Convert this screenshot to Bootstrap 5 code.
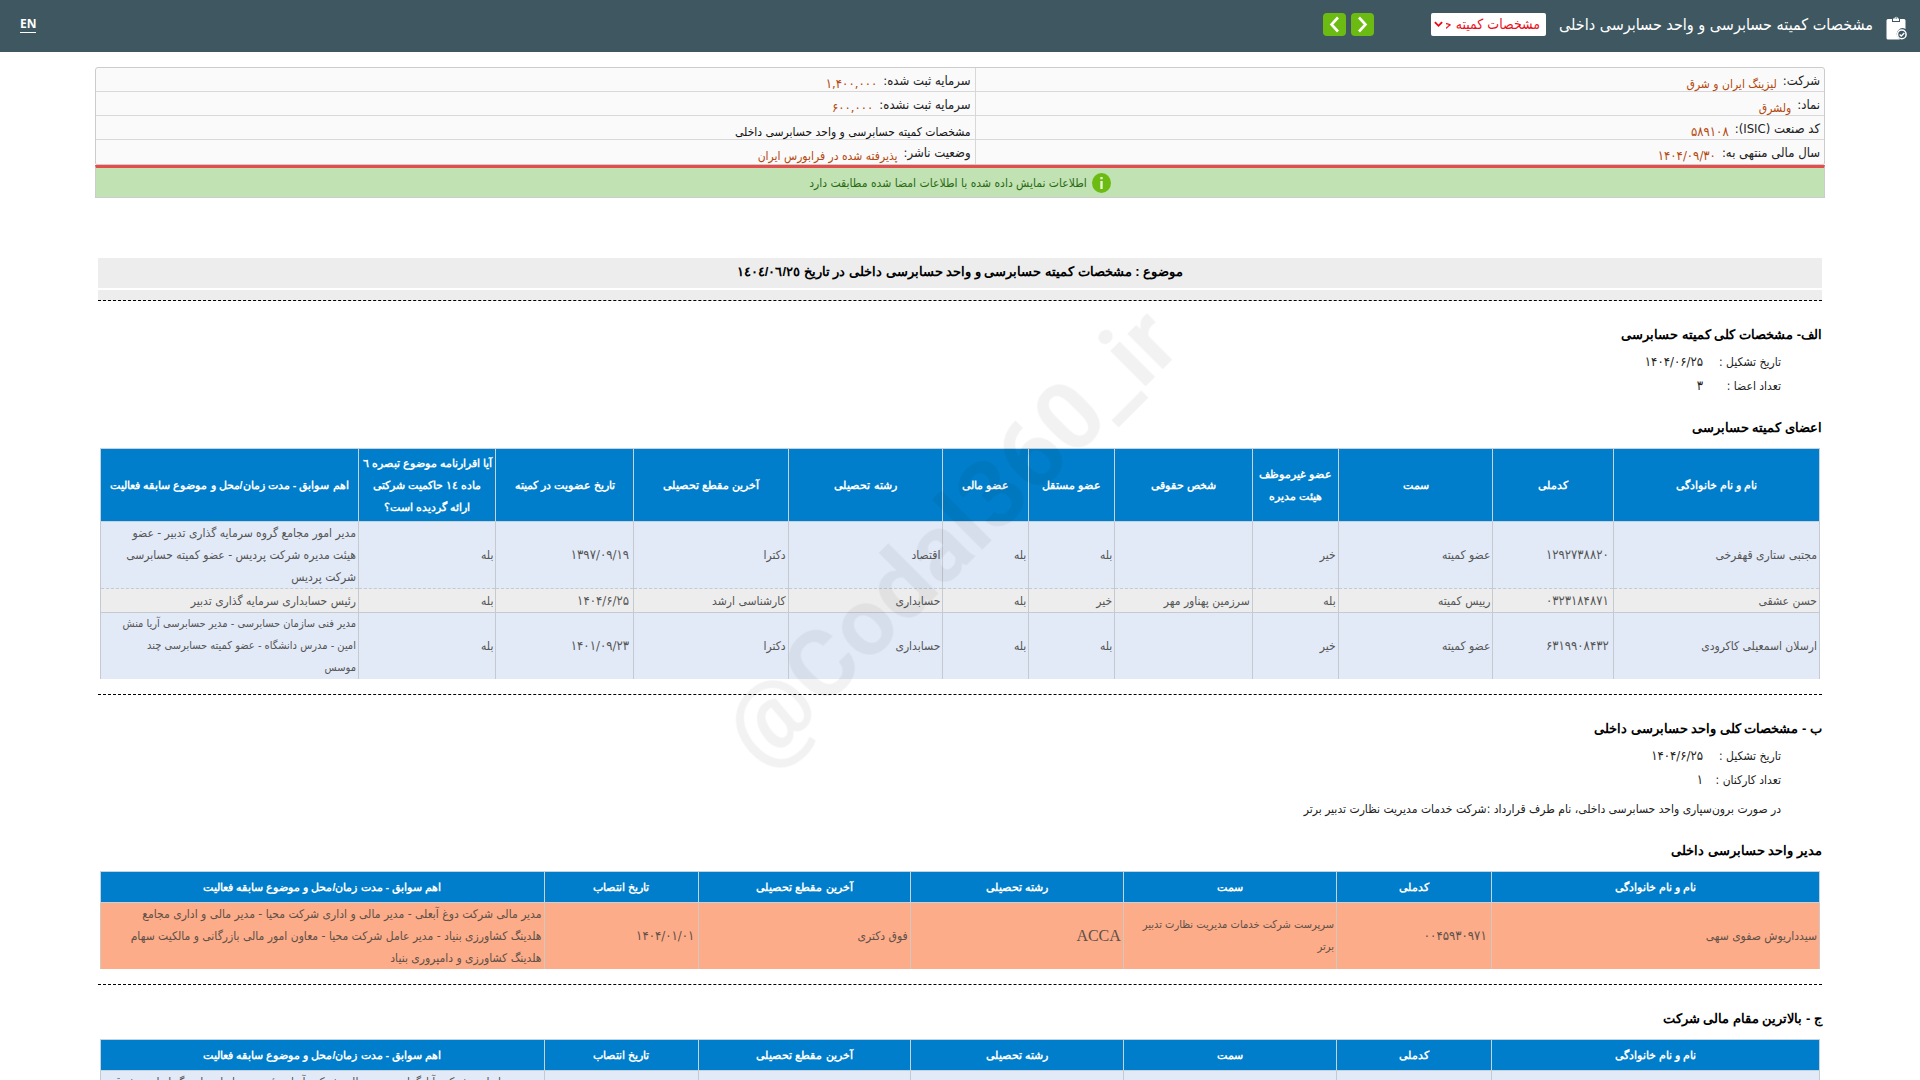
<!DOCTYPE html>
<html lang="fa" dir="rtl">
<head>
<meta charset="utf-8">
<meta name="viewport" content="width=device-width, initial-scale=1">
<title>مشخصات کمیته حسابرسی و واحد حسابرسی داخلی</title>
<link rel="stylesheet" href="https://cdn.jsdelivr.net/npm/bootstrap@5.3.0/dist/css/bootstrap.min.css">
<style>
  body { font-family: "DejaVu Sans Condensed", "DejaVu Sans", sans-serif; font-size: 12px; line-height: 24px; color: #222; background: #fff; }
  .topbar { background: #3e5761; height: 52px; padding: 0 13px 4px 20px; }
  .topbar-icon { margin-top: 6px; }
  .topbar-title { font-size: 16px; line-height: 24px; color: #fff; padding-top: 2px; margin: 0 13px 0 13px; }
  .sheet-select { width: 115px; height: 23px; padding: 0 6px 0 15px; border: 0; border-radius: 2px; font-size: 14px; line-height: 22px; color: #e8101c; text-overflow: clip;
    background: #fff url("data:image/svg+xml,%3Csvg xmlns='http://www.w3.org/2000/svg' viewBox='0 0 10 8'%3E%3Cpath d='M1 2l4 4 4-4' fill='none' stroke='%23f00010' stroke-width='2'/%3E%3C/svg%3E") no-repeat left 3px center / 9px 8px; }
  .step-btn { width: 23px; height: 23px; border: 0; border-radius: 4px; background: #6cbb12; }
  .step-group { margin-right: 57px; gap: 5px; }
  .lang-link { font: bold 12px/16px "Noto Sans", sans-serif; color: #fff; border-bottom: 1px solid #fff; }
  .page-body { padding: 15px 95px 0; }
  .info-box { border: 1px solid #ccc; border-radius: 3px 3px 2px 2px; background: #fafafa; }
  .info-line { height: 24px; padding: 0 4px; border-bottom: 1px solid #d8d8d8; gap: 6px; color: #222; }
  .info-line:last-child { border-bottom: 0; }
  .info-half + .info-half { border-right: 1px solid #d8d8d8; }
  .info-half-first { width: 49.1%; }
  .info-label { font-size: 13px; line-height: 26px; }
  .info-value { padding-top: 4px; color: #b5480f; }
  .info-plain { color: #111; }
  .notice-bar { border: 1px solid #ccc; border-top: 3px solid #e64c4c; background: #c1e2b3; height: 33px; gap: 5px; color: #2a6b14; }
  .report { margin: 60px 3px 0; }
  .subject { background: #ededed; line-height: 28px; padding-bottom: 2px; font-size: 13px; }
  .subject-tail { background: #ededed; height: 11px; margin-top: 2px; }
  .cut { border-bottom: 1px dashed #000; }
  .cut-after { padding-top: 15px; }
  .subject, .sec-title, .grid-table th { font-family: "Liberation Sans", sans-serif; font-weight: bold; }
  .sec-title { font-size: 13px; line-height: 24px; margin: 0; color: #000; }
  .sec-gap { padding-top: 22px; }
  .facts { padding: 3px 41px 0 0; }
  .facts dt { width: 78px; font-weight: normal; }
  .facts dd { margin: 0; }
  .contract { padding: 5px 41px 0 0; margin: 0; }
  .sub-gap { padding-top: 18px; }
  .table-hold { padding: 8px 2px 0; }
  .grid-table { width: 100%; table-layout: fixed; border-collapse: collapse; line-height: 22px; color: #555; }
  .grid-table th { background: #007ecb; color: #fff; font-size: 11px; text-align: center; border: 1px solid #c6d3dd; padding: 4px 0; }
  .grid-table .tall th { padding: 3px 0; }
  .grid-table td { border: 1px solid #c5c9d0; border-bottom: 0; padding: 0 2px; vertical-align: middle; background: #e2eaf8; }
  .grid-table .soft td { background: #ededed; border-top-style: dashed; height: 24px; }
  .grid-table .warm td { background: #fcac89; color: #5f5048; border-color: #d3c8c0; }
  .num { font-size: 13px; }
  .grid-table .num { padding-right: 4px; }
  .grid-table .dense { font-size: 11px; }
  .latin { font: 16px/22px "Liberation Serif", serif; }
  .stamp { top: 49.6%; left: 49.5%; transform: translate(-50%, -50%) rotate(-45deg); font: bold 95px/1 Roboto, sans-serif; color: rgba(0,0,0,.05); pointer-events: none; white-space: nowrap; }
</style>
</head>
<body class="vh-100 overflow-hidden">
<header class="topbar d-flex align-items-center">
  <svg class="topbar-icon" width="21" height="25" viewBox="0 0 21 25" aria-hidden="true">
    <path d="M2 4h4v3h8V4h4a1.500 1.500 0 0 1 1.500 1.500V14a5.800 5.800 0 0 0-7.500 8.500q.8 1.200 2 2H2A1.500 1.500 0 0 1 .5 23V5.500A1.500 1.500 0 0 1 2 4z" fill="#fff"/>
    <path d="M7 6V3.500h1.500a1.700 1.700 0 1 1 3.400 0H13V6z" fill="#fff"/><circle cx="10.200" cy="3" r=".8" fill="#3e5761"/>
    <circle cx="15.800" cy="19.400" r="4.300" fill="#3e5761" stroke="#fff" stroke-width="1.500"/>
    <path d="M13.600 19.400l1.700 1.700 3-3.200" fill="none" stroke="#fff" stroke-width="1.400"/>
  </svg>
  <label class="topbar-title" for="sheet">مشخصات کمیته حسابرسی و واحد حسابرسی داخلی</label>
  <select id="sheet" class="form-select sheet-select"><option>مشخصات کمیته حسابرسی و واحد حسابرسی داخلی</option></select>
  <div class="step-group d-flex">
    <button type="button" class="btn step-btn p-0 d-flex align-items-center justify-content-center" aria-label="قبلی"><svg width="11" height="17" viewBox="0 0 11 17"><path d="M2 1.500l6.500 7-6.500 7" fill="none" stroke="#fff" stroke-width="2.600"/></svg></button>
    <button type="button" class="btn step-btn p-0 d-flex align-items-center justify-content-center" aria-label="بعدی"><svg width="11" height="17" viewBox="0 0 11 17"><path d="M9 1.500l-6.500 7 6.500 7" fill="none" stroke="#fff" stroke-width="2.600"/></svg></button>
  </div>
  <a href="#" class="lang-link me-auto text-decoration-none">EN</a>
</header>

<main class="page-body">
  <section class="info-box d-flex">
    <div class="info-half info-half-first">
      <div class="info-line d-flex"><span class="info-label">شرکت:</span><span class="info-value">لیزینگ ایران و شرق</span></div>
      <div class="info-line d-flex"><span class="info-label">نماد:</span><span class="info-value">ولشرق</span></div>
      <div class="info-line d-flex"><span class="info-label">کد صنعت (ISIC):</span><span class="info-value num">۵۸۹۱۰۸</span></div>
      <div class="info-line d-flex"><span class="info-label">سال مالی منتهی به:</span><span class="info-value num">۱۴۰۴/۰۹/۳۰</span></div>
    </div>
    <div class="info-half flex-grow-1">
      <div class="info-line d-flex"><span class="info-label">سرمایه ثبت شده:</span><span class="info-value num">۱,۴۰۰,۰۰۰</span></div>
      <div class="info-line d-flex"><span class="info-label">سرمایه ثبت نشده:</span><span class="info-value num">۶۰۰,۰۰۰</span></div>
      <div class="info-line d-flex"><span class="info-value info-plain">مشخصات کمیته حسابرسی و واحد حسابرسی داخلی</span></div>
      <div class="info-line d-flex"><span class="info-label">وضعیت ناشر:</span><span class="info-value">پذیرفته شده در فرابورس ایران</span></div>
    </div>
  </section>
  <div class="notice-bar d-flex align-items-center justify-content-center">
    <svg width="19" height="20" viewBox="0 0 19 20" aria-hidden="true"><ellipse cx="9.500" cy="10" rx="9.500" ry="10" fill="#6cbb12"/><path d="M9.500 4v2.200M9.500 8v8" stroke="#e4f4d4" stroke-width="2.400"/></svg>
    <span>اطلاعات نمایش داده شده با اطلاعات امضا شده مطابقت دارد</span>
  </div>

  <article class="report">
    <h1 class="subject text-center text-black mb-0">موضوع : مشخصات کمیته حسابرسی و واحد حسابرسی داخلی در تاریخ ١٤٠٤/٠٦/٢٥</h1>
    <div class="subject-tail cut"></div>

    <section class="sec-gap">
      <h2 class="sec-title">الف- مشخصات کلی کمیته حسابرسی</h2>
      <dl class="facts mb-0">
        <div class="d-flex"><dt>تاریخ تشکیل :</dt><dd class="num">۱۴۰۴/۰۶/۲۵</dd></div>
        <div class="d-flex"><dt>تعداد اعضا :</dt><dd class="num">۳</dd></div>
      </dl>
      <div class="sub-gap"><h3 class="sec-title">اعضای کمیته حسابرسی</h3></div>
      <div class="table-hold">
        <table class="grid-table">
          <colgroup><col style="width:12%"><col style="width:7%"><col style="width:9%"><col style="width:5%"><col style="width:8%"><col style="width:5%"><col style="width:5%"><col style="width:9%"><col style="width:9%"><col style="width:8%"><col style="width:8%"><col style="width:15%"></colgroup>
          <thead><tr class="tall"><th>نام و نام خانوادگی</th><th>کدملی</th><th>سمت</th><th>عضو غیرموظف هیئت مدیره</th><th>شخص حقوقی</th><th>عضو مستقل</th><th>عضو مالی</th><th>رشته تحصیلی</th><th>آخرین مقطع تحصیلی</th><th>تاریخ عضویت در کمیته</th><th>آیا اقرارنامه موضوع تبصره ٦ ماده ١٤ حاکمیت شرکتی<br>ارائه گردیده است؟</th><th>اهم سوابق - مدت زمان/محل و موضوع سابقه فعالیت</th></tr></thead>
          <tbody>
            <tr><td>مجتبی ستاری قهفرخی</td><td class="num">۱۲۹۲۷۳۸۸۲۰</td><td>عضو کمیته</td><td>خیر</td><td></td><td>بله</td><td>بله</td><td>اقتصاد</td><td>دکترا</td><td class="num">۱۳۹۷/۰۹/۱۹</td><td>بله</td><td>مدیر امور مجامع گروه سرمایه گذاری تدبیر - عضو<br>هیئت مدیره شرکت پردیس - عضو کمیته حسابرسی<br>شرکت پردیس</td></tr>
            <tr class="soft"><td>حسن عشقی</td><td class="num">۰۳۲۳۱۸۴۸۷۱</td><td>رییس کمیته</td><td>بله</td><td>سرزمین پهناور مهر</td><td>خیر</td><td>بله</td><td>حسابداری</td><td>کارشناسی ارشد</td><td class="num">۱۴۰۴/۶/۲۵</td><td>بله</td><td>رئیس حسابداری سرمایه گذاری تدبیر</td></tr>
            <tr><td>ارسلان اسمعیلی کاکرودی</td><td class="num">۶۳۱۹۹۰۸۴۳۲</td><td>عضو کمیته</td><td>خیر</td><td></td><td>بله</td><td>بله</td><td>حسابداری</td><td>دکترا</td><td class="num">۱۴۰۱/۰۹/۲۳</td><td>بله</td><td class="dense">مدیر فنی سازمان حسابرسی - مدیر حسابرسی آریا منش<br>امین - مدرس دانشگاه - عضو کمیته حسابرسی چند<br>موسس</td></tr>
          </tbody>
        </table>
      </div>
      <div class="cut cut-after"></div>
    </section>

    <section class="sec-gap">
      <h2 class="sec-title">ب - مشخصات کلی واحد حسابرسی داخلی</h2>
      <dl class="facts mb-0">
        <div class="d-flex"><dt>تاریخ تشکیل :</dt><dd class="num">۱۴۰۴/۶/۲۵</dd></div>
        <div class="d-flex"><dt>تعداد کارکنان :</dt><dd class="num">۱</dd></div>
      </dl>
      <p class="contract">در صورت برون‌سپاری واحد حسابرسی داخلی، نام طرف قرارداد :شرکت خدمات مدیریت نظارت تدبیر برتر</p>
      <div class="sub-gap"><h3 class="sec-title">مدیر واحد حسابرسی داخلی</h3></div>
      <div class="table-hold">
        <table class="grid-table">
          <colgroup><col style="width:19.1%"><col style="width:9%"><col style="width:12.4%"><col style="width:12.4%"><col style="width:12.3%"><col style="width:9%"><col style="width:25.8%"></colgroup>
          <thead><tr><th>نام و نام خانوادگی</th><th>کدملی</th><th>سمت</th><th>رشته تحصیلی</th><th>آخرین مقطع تحصیلی</th><th>تاریخ انتصاب</th><th>اهم سوابق - مدت زمان/محل و موضوع سابقه فعالیت</th></tr></thead>
          <tbody>
            <tr class="warm"><td>سیدداریوش صفوی سهی</td><td class="num">۰۰۴۵۹۳۰۹۷۱</td><td class="dense">سرپرست شرکت خدمات مدیریت نظارت تدبیر<br>برتر</td><td><span class="latin">ACCA</span></td><td>فوق دکتری</td><td class="num">۱۴۰۴/۰۱/۰۱</td><td>مدیر مالی شرکت دوغ آبعلی - مدیر مالی و اداری شرکت محیا - مدیر مالی و اداری مجامع<br>هلدینگ کشاورزی بنیاد - مدیر عامل شرکت محیا - معاون امور مالی بازرگانی و مالکیت سهام<br>هلدینگ کشاورزی و دامپروری بنیاد</td></tr>
          </tbody>
        </table>
      </div>
      <div class="cut cut-after"></div>
    </section>

    <section class="sec-gap">
      <h2 class="sec-title">ج - بالاترین مقام مالی شرکت</h2>
      <div class="table-hold">
        <table class="grid-table">
          <colgroup><col style="width:19.1%"><col style="width:9%"><col style="width:12.4%"><col style="width:12.4%"><col style="width:12.3%"><col style="width:9%"><col style="width:25.8%"></colgroup>
          <thead><tr><th>نام و نام خانوادگی</th><th>کدملی</th><th>سمت</th><th>رشته تحصیلی</th><th>آخرین مقطع تحصیلی</th><th>تاریخ انتصاب</th><th>اهم سوابق - مدت زمان/محل و موضوع سابقه فعالیت</th></tr></thead>
          <tbody><tr><td></td><td></td><td></td><td></td><td></td><td></td><td>مدیر حسابداری شرکت آبادگران - مدیر مالی شرکت آریا - رئیس حسابداری لیزینگ ایران و شرق</td></tr></tbody>
        </table>
      </div>
    </section>
  </article>
</main>
<div class="stamp position-fixed" dir="ltr" aria-hidden="true">@Codal360_ir</div>
<script src="https://cdn.jsdelivr.net/npm/bootstrap@5.3.0/dist/js/bootstrap.bundle.min.js"></script>
</body>
</html>
